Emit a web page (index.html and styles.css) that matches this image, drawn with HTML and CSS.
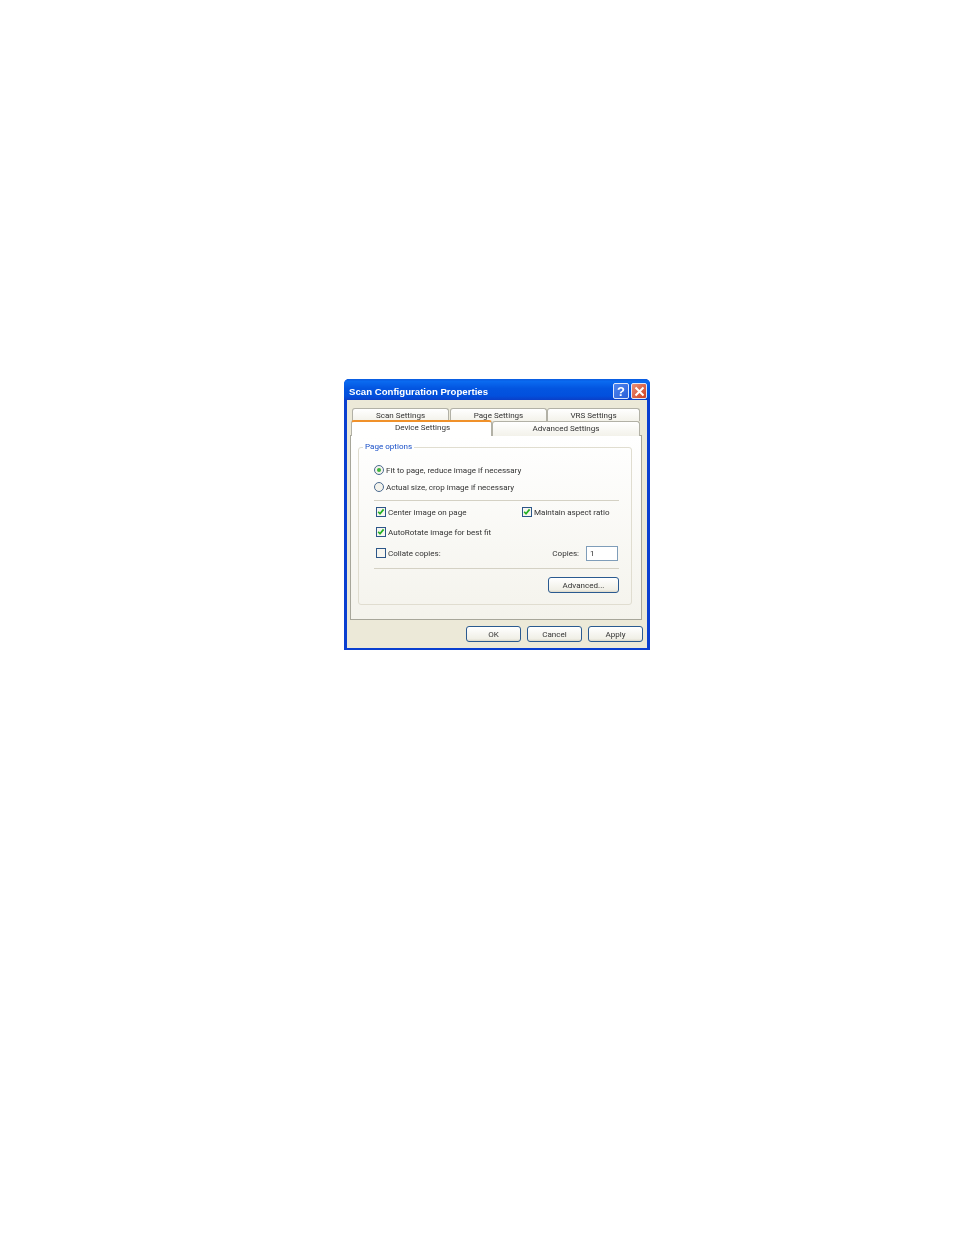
FILE: index.html
```html
<!DOCTYPE html>
<html lang="en">
<head>
<meta charset="utf-8">
<title>Scan Configuration Properties</title>
<link rel="stylesheet" href="styles.css">
</head>
<body>
<main class="dialog">
  <header class="titlebar">
    <span class="title">Scan Configuration Properties</span>
    <span class="winbtn help">?</span>
    <span class="winbtn close">
      <svg width="11" height="11" viewBox="0 0 11 11"><path d="M1.5 1.5l8 8M9.5 1.5l-8 8" stroke="#fff" stroke-width="2" fill="none"/></svg>
    </span>
  </header>
  <div class="client">
    <div class="tabs">
      <div class="tabrow back">
        <span class="tab t1">Scan Settings</span>
        <span class="tab t2">Page Settings</span>
        <span class="tab t3">VRS Settings</span>
      </div>
      <div class="tabrow front">
        <span class="tab active">Device Settings</span>
        <span class="tab t4">Advanced Settings</span>
      </div>
    </div>
    <section class="panel">
      <fieldset class="group">
        <legend>Page options</legend>
        <div class="radio-row first"><span class="radio on"></span><span>Fit to page, reduce image if necessary</span></div>
        <div class="radio-row second"><span class="radio"></span><span>Actual size, crop image if necessary</span></div>
        <hr class="sep sep1">
        <div class="row r1">
          <div class="check-item wide"><span class="check on"><svg width="8" height="8" viewBox="0 0 8 8"><path d="M1.2 3.8l1.8 2 3.6-4.4" stroke="#22b022" stroke-width="1.7" fill="none"/></svg></span><span>Center image on page</span></div>
          <div class="check-item"><span class="check on"><svg width="8" height="8" viewBox="0 0 8 8"><path d="M1.2 3.8l1.8 2 3.6-4.4" stroke="#22b022" stroke-width="1.7" fill="none"/></svg></span><span>Maintain aspect ratio</span></div>
        </div>
        <div class="row r2">
          <div class="check-item"><span class="check on"><svg width="8" height="8" viewBox="0 0 8 8"><path d="M1.2 3.8l1.8 2 3.6-4.4" stroke="#22b022" stroke-width="1.7" fill="none"/></svg></span><span>AutoRotate image for best fit</span></div>
        </div>
        <div class="row r3">
          <div class="check-item"><span class="check"></span><span>Collate copies:</span></div>
          <div class="copies"><span>Copies:</span><span class="input">1</span></div>
        </div>
        <hr class="sep sep2">
        <div class="adv-row"><span class="btn adv">Advanced...</span></div>
      </fieldset>
    </section>
    <footer class="actions">
      <span class="btn">OK</span>
      <span class="btn">Cancel</span>
      <span class="btn">Apply</span>
    </footer>
  </div>
</main>
</body>
</html>
```
FILE: styles.css
```css
* { box-sizing: border-box; }
html, body { margin: 0; background: #fff; }
body { height: 1235px; overflow: hidden; font-family: Roboto, "Liberation Sans", Arial, sans-serif; font-size: 8.05px; color: #333; white-space: nowrap; }
.dialog { width: 306px; height: 271px; margin: 379px 0 0 344px; display: flex; flex-direction: column; background: #0a3fd0; border-radius: 5px 5px 0 0; filter: blur(.25px); }
.titlebar { height: 21px; flex: none; display: flex; align-items: center; padding: 3px 3px 0 5px; gap: 2px; border-radius: 5px 5px 0 0;
  background: linear-gradient(#0a5be0 0, #0a6af0 12%, #0355e0 45%, #0250dd 80%, #0a3fc8 100%); }
.title { flex: 1; color: #fff; font-family: "Liberation Sans", Arial, sans-serif; font-weight: 700; font-size: 9.65px; }
.winbtn { width: 16px; height: 16px; border: 1px solid #dfe8fb; border-radius: 2px; display: flex; align-items: center; justify-content: center; color: #fff; font-family: "Liberation Sans", Arial, sans-serif; font-weight: 700; font-size: 13px; }
.help { background: linear-gradient(135deg, #4f86ee, #2a5fd8); }
.close { background: linear-gradient(135deg, #e8907a, #d0401f); }
.client { flex: 1; margin: 0 3px 2px 2px; padding: 0 0 0 3px; background: #ece9d8; border-left: 1px solid #0a3fd0; display: flex; flex-direction: column; }
.tabs { height: 35px; flex: none; padding-top: 8px; }
.tabrow { display: flex; }
.tab { display: flex; align-items: center; justify-content: center; height: 13px; background: linear-gradient(#fff, #f3f2ea); border: 1px solid #b2b1a6; border-bottom: 0; border-radius: 3px 3px 0 0; }
.back { padding-left: 2px; }
.t1 { width: 97px; }
.t2 { width: 97px; margin-left: 1px; }
.t3 { width: 93px; }
.front { margin-top: -1px; position: relative; }
.active { width: 141px; height: 16px; margin-left: 1px; background: #fff; border-top: 2px solid #f0912a; position: relative; z-index: 1; padding-bottom: 3px; padding-left: 2px; }
.t4 { width: 148px; height: 15px; margin-top: 1px; padding-bottom: 2px; }
.panel { width: 292px; height: 185px; flex: none; background: linear-gradient(#fff, #f4f3ec); border: 1px solid #a7a69a; padding: 6px 9px 0 7px; }
.group { margin: 0; padding: 0 12px 0 15px; width: 274px; min-width: 0; height: 163px; border: 1px solid #e0ddd0; border-radius: 3px; display: flow-root; }
.group legend { padding: 0 2px; margin-left: -11px; color: #1a50c8; line-height: 10px; }
.radio-row { display: flex; align-items: center; gap: 2px; height: 12px; }
.first { margin-top: 12px; }
.second { margin-top: 5px; }
.radio { width: 10px; height: 10px; border-radius: 50%; border: 1px solid #4a6a90; background: #f4f3ec; flex: none; position: relative; }
.radio.on::after { content: ""; position: absolute; inset: 2px; border-radius: 50%; background: #3cb43c; }
.sep { border: 0; border-top: 1px solid #d4d1c4; margin: 0; }
.sep1 { margin-top: 7px; }
.row { display: flex; align-items: center; height: 12px; padding-left: 2px; }
.r1 { margin-top: 5px; }
.r2 { margin-top: 8px; }
.r3 { margin-top: 9px; }
.check-item { display: flex; align-items: center; gap: 2px; }
.wide { width: 146px; }
.check { width: 10px; height: 10px; border: 1px solid #2c5688; background: #f6f5ef; display: flex; align-items: center; justify-content: center; flex: none; }
.copies { margin-left: auto; display: flex; align-items: center; gap: 7px; padding-top: 1px; }
.input { width: 32px; height: 15px; background: #fff; border: 1px solid #7f9db9; padding-left: 3px; line-height: 13px; margin-right: 1px; margin-top: -1px; }
.sep2 { margin-top: 9px; }
.adv-row { display: flex; justify-content: flex-end; margin-top: 8px; }
.btn { display: flex; align-items: center; justify-content: center; width: 55px; height: 16px; padding-top: 1px; border: 1px solid #2a5a90; border-radius: 3px; background: linear-gradient(#fff, #f0efe6 85%, #dcd8c8); }
.adv { width: 71px; }
.actions { display: flex; justify-content: flex-end; gap: 6px; margin-top: 6px; padding-right: 4px; }
```
